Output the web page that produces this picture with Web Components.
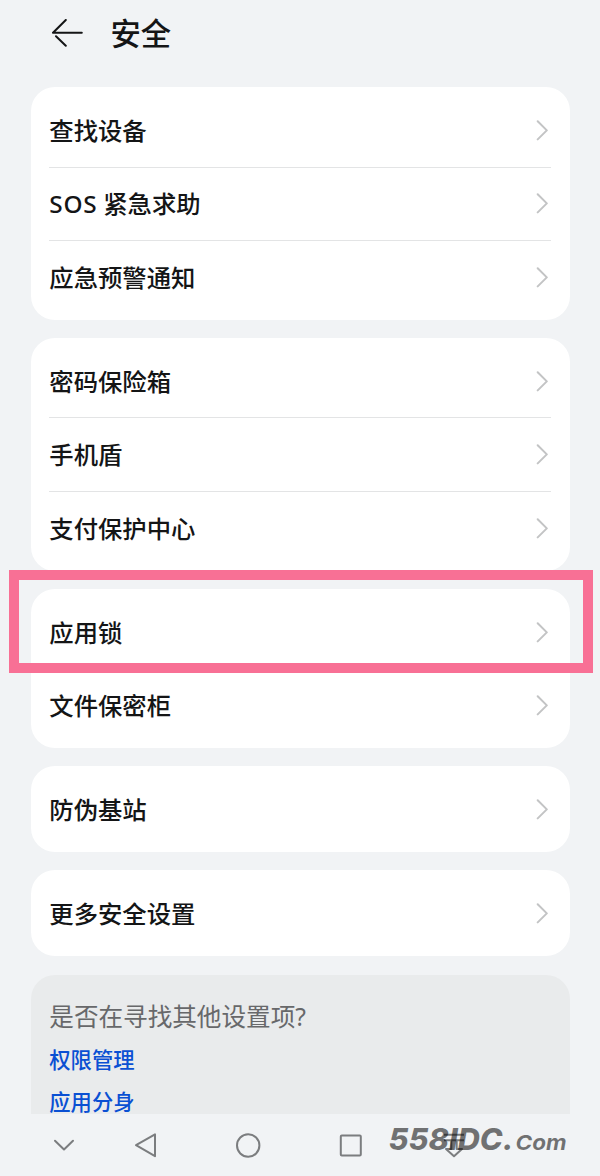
<!DOCTYPE html>
<html lang="zh-CN">
<head>
<meta charset="utf-8">
<title>安全</title>
<style>
  body {
    margin: 0;
    background: #f1f3f5;
    color: #141516;
    font-family: "Noto Sans", "Noto Sans CJK SC", sans-serif;
  }
  .latin {
    margin-right: -0.4px;
    letter-spacing: 0.7px;
  }
</style>
</head>
<body>
<security-page>
  <page-header slot="header">安全</page-header>
  <setting-card>
    <setting-row>查找设备</setting-row>
    <setting-row><span class="latin">SOS</span> 紧急求助</setting-row>
    <setting-row>应急预警通知</setting-row>
  </setting-card>
  <setting-card>
    <setting-row>密码保险箱</setting-row>
    <setting-row>手机盾</setting-row>
    <setting-row>支付保护中心</setting-row>
  </setting-card>
  <setting-card>
    <setting-row highlighted>应用锁</setting-row>
    <setting-row>文件保密柜</setting-row>
  </setting-card>
  <setting-card>
    <setting-row>防伪基站</setting-row>
  </setting-card>
  <setting-card>
    <setting-row>更多安全设置</setting-row>
  </setting-card>
  <related-settings>
    <span slot="title">是否在寻找其他设置项?</span>
    <a>权限管理</a>
    <a>应用分身</a>
  </related-settings>
  <system-nav slot="nav"></system-nav>
</security-page>

<script>
class SecurityPage extends HTMLElement {
  constructor() {
    super();
    this.attachShadow({ mode: "open" });
    this.shadowRoot.innerHTML = `
      <style>
        :host {
          display: flex;
          flex-direction: column;
          height: 1176px;
          overflow: hidden;
        }
        main {
          flex: 1;
          min-height: 0;
          display: flex;
          flex-direction: column;
          gap: 18.3px;
          padding: 0 30.5px 0 31px;
          overflow: hidden;
        }
      </style>
      <slot name="header"></slot>
      <main><slot></slot></main>
      <slot name="nav"></slot>
    `;
  }
}

class PageHeader extends HTMLElement {
  constructor() {
    super();
    this.attachShadow({ mode: "open" });
    this.shadowRoot.innerHTML = `
      <style>
        :host {
          display: flex;
          flex: none;
          align-items: center;
          gap: 27.4px;
          box-sizing: border-box;
          height: 87.2px;
          padding: 0 51px 19px;
        }
        svg { display: block; }
        h1 {
          margin: 0;
          font-size: 30.3px;
          font-weight: 500;
          line-height: 44px;
        }
      </style>
      <svg width="32" height="30" viewBox="0 0 32 30" fill="none" stroke="currentColor" stroke-width="2" stroke-linecap="round" stroke-linejoin="round">
        <path d="M14.8 1 2 13.8h28.8M5 17.2 14.8 26.8"/>
      </svg>
      <h1><slot></slot></h1>
    `;
  }
}

class SettingCard extends HTMLElement {
  constructor() {
    super();
    this.attachShadow({ mode: "open" });
    this.shadowRoot.innerHTML = `
      <style>
        :host {
          display: block;
          flex: none;
          padding: 7px 19px 5.4px 18.3px;
          border-radius: 24px;
          background: #fff;
        }
        ::slotted(setting-row:not(:first-child)) {
          --divider: #e3e4e5;
        }
      </style>
      <slot></slot>
    `;
  }
}

class SettingRow extends HTMLElement {
  constructor() {
    super();
    this.attachShadow({ mode: "open" });
    this.shadowRoot.innerHTML = `
      <style>
        :host {
          display: flex;
          position: relative;
          align-items: center;
          justify-content: space-between;
          box-sizing: border-box;
          height: 73.4px;
          padding-right: 1px;
          font-size: 24.35px;
          font-weight: 500;
          line-height: 36px;
          box-shadow: 0 -1px 0 var(--divider, transparent);
        }
        svg { display: block; }
        /* Marker frame drawn over the card and its neighbours */
        .marker { display: none; }
        :host([highlighted]) .marker {
          display: block;
          position: absolute;
          z-index: 1;
          box-sizing: border-box;
          left: -40px;
          right: -42px;
          top: -26px;
          height: 103px;
          border: 10px solid #f87095;
        }
      </style>
      <span><slot></slot></span>
      <svg width="14" height="22" viewBox="0 0 14 22" fill="none" stroke="#c3c4c5" stroke-width="2" stroke-linecap="round" stroke-linejoin="round">
        <path d="M1.7 1.2 10.8 10.4 1.7 19.4"/>
      </svg>
      <div class="marker"></div>
    `;
  }
}

class RelatedSettings extends HTMLElement {
  constructor() {
    super();
    this.attachShadow({ mode: "open" });
    this.shadowRoot.innerHTML = `
      <style>
        :host {
          display: flex;
          flex: none;
          flex-direction: column;
          height: 200px;
          box-sizing: border-box;
          padding: 24.4px 18.3px;
          border-radius: 24px;
          background: #e9ebec;
          color: #67686a;
          font-size: 24.6px;
          line-height: 36px;
        }
        ::slotted(a) {
          color: #0a50d3;
          font-size: 21.3px;
          font-weight: 500;
          line-height: 41.3px;
        }
        .links {
          display: flex;
          flex-direction: column;
          padding-top: 4.4px;
        }
      </style>
      <slot name="title"></slot>
      <div class="links"><slot></slot></div>
    `;
  }
}

class SystemNav extends HTMLElement {
  constructor() {
    super();
    this.attachShadow({ mode: "open" });
    this.shadowRoot.innerHTML = `
      <style>
        :host {
          display: block;
          position: relative;
          flex: none;
          height: 62px;
          background: #f1f3f5;
        }
        nav {
          display: grid;
          grid-template-columns: 82px 102px 103px 103px 32px;
          align-items: center;
          height: 62px;
          padding-left: 48px;
        }
        svg { display: block; }
        .brand {
          position: absolute;
          left: 384px;
          top: 6px;
        }
      </style>
      <nav>
        <svg width="32" height="32" fill="none" stroke="#7b7d7f" stroke-width="2" stroke-linecap="round" stroke-linejoin="round"><path d="M7 11.7 16 20.5 25 11.7"/></svg>
        <svg width="32" height="32" fill="none" stroke="#7b7d7f" stroke-width="2" stroke-linejoin="round"><path d="M25 5.4V27.2L6 16.2Z"/></svg>
        <svg width="32" height="32" fill="none" stroke="#7b7d7f" stroke-width="2"><circle cx="16.2" cy="16.5" r="11.2"/></svg>
        <svg width="32" height="32" fill="none" stroke="#7b7d7f" stroke-width="2"><rect x="5.8" y="6.5" width="20" height="20" rx="1"/></svg>
        <svg width="32" height="32" fill="none" stroke="#7b7d7f" stroke-width="2" stroke-linejoin="round"><path d="M6 5.7h20M6 11.2h20M13.3 11.2V20H8L16 27.3 24 20H18.7V11.2"/></svg>
      </nav>
      <svg class="brand" width="190" height="40" fill="#000" fill-opacity=".54" font-family="Inter, sans-serif" font-style="italic">
        <text x="4.5" y="30" font-size="30" font-weight="800" textLength="125" lengthAdjust="spacingAndGlyphs">558IDC.</text>
        <text x="131.5" y="30" font-size="20.5" font-weight="700" textLength="51" lengthAdjust="spacingAndGlyphs">Com</text>
      </svg>
    `;
  }
}

customElements.define("security-page", SecurityPage);
customElements.define("page-header", PageHeader);
customElements.define("setting-card", SettingCard);
customElements.define("setting-row", SettingRow);
customElements.define("related-settings", RelatedSettings);
customElements.define("system-nav", SystemNav);
</script>
</body>
</html>
